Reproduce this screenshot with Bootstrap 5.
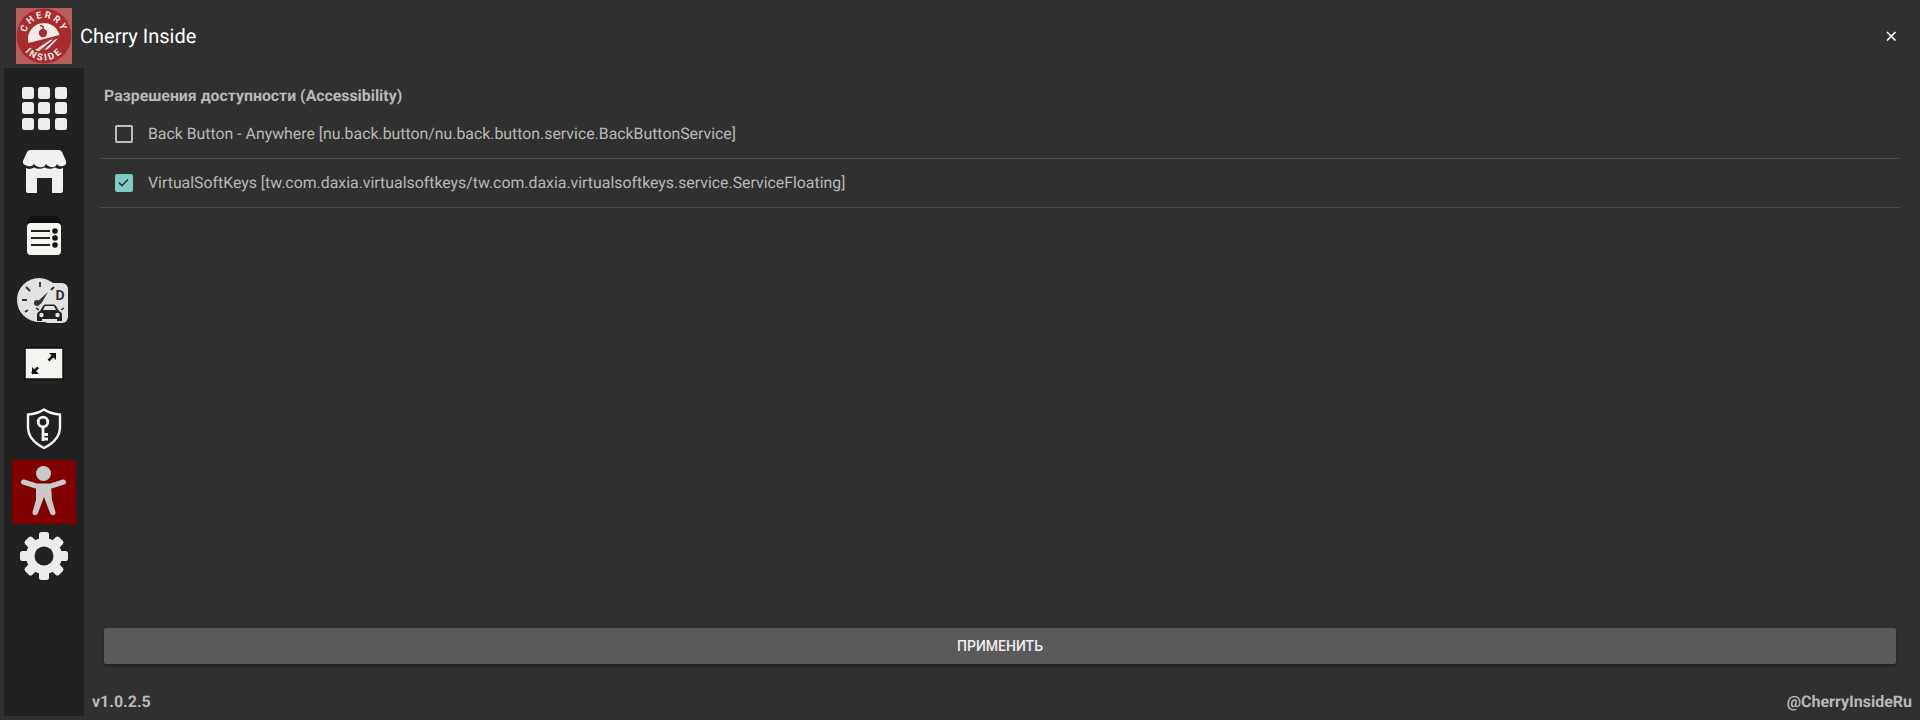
<!DOCTYPE html>
<html lang="ru">
<head>
  <meta charset="UTF-8" />
  <meta name="viewport" content="width=device-width, initial-scale=1" />
  <title>Cherry Inside</title>
  <link href="https://cdn.jsdelivr.net/npm/bootstrap@5.3.0/dist/css/bootstrap.min.css" rel="stylesheet">
  <style>
    body {
      background-color: #303030;
      font-family: Roboto, "Liberation Sans", sans-serif;
      text-rendering: geometricPrecision;
      overflow: hidden;
    }
    .app-head { height: 68px; padding: 8px 0 0 16px; }
    .app-logo { width: 56px; height: 56px; display: block; }
    .app-title { font-size: 20px; color: #fff; margin-left: 8px; font-weight: 400; line-height: 56px; }
    .app-close { background: none; border: 0; padding: 0; width: 24px; height: 56px; margin-right: 17px; line-height: 0; }
    .side-bar { width: 80px; margin-left: 4px; margin-bottom: 4px; padding: 8px; background-color: #212121; }
    .side-item { width: 64px; height: 64px; display: block; }
    .side-item svg { display: block; }
    .side-item.is-active { background-color: #800000; }
    .perm-title { font-size: 15.85px; font-weight: 700; color: #b8b8b8; line-height: 22px; margin: 17px 24px 3px 20px; }
    .perm-list { margin: 0 20px 0 16px; --bs-list-group-bg: transparent; --bs-list-group-border-color: #4b4b4b; }
    .perm-list .list-group-item,
    .perm-list .list-group-item:last-child { height: 48px; padding: 0 0 0 15px; font-size: 15.85px; color: #b8b8b8; display: flex; align-items: center; border-bottom: 1px solid #4b4b4b; box-sizing: content-box; }
    .perm-list .form-check-input { width: 18px; height: 18px; margin: 0 15px 0 0; background-color: transparent; border: 2px solid #bdbdbd; border-radius: 2px; flex: none; }
    .perm-list .form-check-input:checked {
      background-color: #80cbc4; border-color: #80cbc4;
      background-image: url("data:image/svg+xml,%3csvg xmlns='http://www.w3.org/2000/svg' viewBox='0 0 18 18'%3e%3cpath fill='none' stroke='%23303030' stroke-width='2' d='M2.5 8.5l4 4 7.500-8'/%3e%3c/svg%3e");
    }
    .apply-btn { margin: 0 24px 0 20px; height: 36px; background-color: #5a5a5a; color: #eee; border: 0; border-radius: 2px; font-size: 14px; font-weight: 500; box-shadow: 0 2px 3px rgba(0,0,0,.3); }
    .apply-btn:hover { background-color: #5a5a5a; color: #eee; }
    .foot-line { font-size: 16px; font-weight: 700; color: #b8b8b8; line-height: 24px; margin: 26px 8px 6px 8px; }
  </style>
</head>
<body>
  <div class="vh-100 d-flex flex-column">
    <!-- шапка -->
    <header class="app-head d-flex align-items-start flex-shrink-0">
      <svg class="app-logo" viewBox="0 0 56 56">
        <defs>
          <path id="arcTop" d="M10 28A18 18 0 0 1 46 28" />
          <path id="arcBot" d="M3.500 28A24.500 24.500 0 0 0 52.500 28" />
        </defs>
        <rect width="56" height="56" fill="#b9605f" />
        <circle cx="28" cy="28" r="27.500" fill="#a82c2d" />
        <text font-family="Roboto, sans-serif" font-size="9.500" font-weight="700" fill="#f5eeee" letter-spacing="2.200" text-anchor="middle"><textPath href="#arcTop" startOffset="50%">CHERRY</textPath></text>
        <text font-family="Roboto, sans-serif" font-size="9.500" font-weight="700" fill="#f5eeee" letter-spacing="2.200" text-anchor="middle"><textPath href="#arcBot" startOffset="50%">INSIDE</textPath></text>
        <path d="M12.500 35A16 16 0 0 1 43.500 27Z" fill="#f3eaea" />
        <path d="M19 42L34 32 37 31.500 23 43Z M28 42L39 31.500 42 30.500 32 41Z" fill="#f3eaea" />
        <circle cx="27" cy="25" r="4.200" fill="#a82c2d" />
        <path d="M27 21V18.500l-3-1" fill="none" stroke="#a82c2d" stroke-width="1.500" />
      </svg>
      <span class="app-title">Cherry Inside</span>
      <button class="app-close ms-auto d-flex align-items-center" type="button" aria-label="Close">
        <svg width="24" height="24" viewBox="0 0 24 24"><path d="M8 8l8.500 8.500M16.500 8L8 16.500" stroke="#fff" stroke-width="1.700" /></svg>
      </button>
    </header>

    <div class="d-flex flex-grow-1" style="min-height:0">
      <!-- боковое меню -->
      <nav class="side-bar flex-shrink-0">
        <a class="side-item" href="#">
          <svg width="64" height="64" viewBox="0 0 64 64" fill="#eeeeec">
            <rect x="10" y="11" width="12" height="12" rx="2.500" /><rect x="26" y="11" width="12" height="12" rx="2.500" /><rect x="43" y="11" width="12" height="12" rx="2.500" />
            <rect x="10" y="26" width="12" height="12" rx="2.500" /><rect x="26" y="26" width="12" height="12" rx="2.500" /><rect x="43" y="26" width="12" height="12" rx="2.500" />
            <rect x="10" y="42" width="12" height="12" rx="2.500" /><rect x="26" y="42" width="12" height="12" rx="2.500" /><rect x="43" y="42" width="12" height="12" rx="2.500" />
          </svg>
        </a>
        <a class="side-item" href="#">
          <svg width="64" height="64" viewBox="0 0 64 64" fill="#f0f0ee">
            <path d="M18 10H47Q49 10 50 12L54 21Q55 25 51 26 47 27 45 24 43 28 39 27 36 27 34 24 32 28 27 27 24 27 22 24 20 27 16 26 10 25 11 21L15 12Q16 10 18 10Z" />
            <path d="M14 28Q18 30 22 27.500 27 30 32.500 27.500 38 30 43 27.500 47 30 51 28V51Q51 53 49 53H40V38H25V53H16Q14 53 14 51Z" />
          </svg>
        </a>
        <a class="side-item" href="#">
          <svg width="64" height="64" viewBox="0 0 64 64">
            <path d="M15 22Q15 12 22 12H42Q49 12 49 22Z" fill="#111" />
            <rect x="15" y="19" width="34" height="32" rx="4" fill="#f5f5f1" />
            <path d="M19 27H38M19 34H38M19 41H38" stroke="#222" stroke-width="2" />
            <circle cx="43" cy="27" r="2.800" fill="#111" /><circle cx="43" cy="34" r="2.800" fill="#111" /><circle cx="43" cy="41" r="2.800" fill="#111" />
          </svg>
        </a>
        <a class="side-item" href="#">
          <svg width="64" height="64" viewBox="0 0 64 64">
            <rect x="30" y="15" width="26" height="40" rx="6" fill="#e2e2e0" />
            <circle cx="27" cy="32" r="22" fill="#e2e2e0" />
            <path d="M28 14v5M14 19l4 4M42 19l-3 3M10 32h5M13 44l3-2" stroke="#333" stroke-width="1.800" />
            <path d="M25 34l11-10-7 12Z" fill="#333" /><circle cx="25" cy="35" r="3" fill="#333" />
            <text x="48" y="32" font-family="Roboto, sans-serif" font-size="14" font-weight="700" fill="#333" text-anchor="middle">D</text>
            <path d="M26 43l3-6Q30 35 32 35H43Q45 35 46 37L49 43Q52 44 52 47V54H24V47Q24 44 26 43Z" fill="#e2e2e0" />
            <path d="M28 43l3-5Q32 36.500 33 36.500H42Q43 36.500 44 38L47 43Q50 44 50 47V53H45V51H30V53H25V47Q25 44 28 43Z" fill="#222" />
            <path d="M31 42l2-4H42l2 4Z" fill="#e2e2e0" />
            <circle cx="29.500" cy="47" r="2.200" fill="#e2e2e0" /><circle cx="45.500" cy="47" r="2.200" fill="#e2e2e0" />
            <path d="M24 40l3 2M52 40l-3 2" stroke="#222" stroke-width="1.500" />
          </svg>
        </a>
        <a class="side-item" href="#">
          <svg width="64" height="64" viewBox="0 0 64 64">
            <rect x="13" y="16" width="38" height="31" fill="#f5f5f1" stroke="#0c0c0c" stroke-width="1.500" />
            <path d="M36.500 28.500L42 23M20 41.500L26 35.500" stroke="#111" stroke-width="2.500" />
            <path d="M37 21H44V28ZM27 42H20V35Z" fill="#111" />
          </svg>
        </a>
        <a class="side-item" href="#">
          <svg width="64" height="64" viewBox="0 0 64 64" fill="none" stroke="#f5f5f5">
            <path d="M32 13.500Q39 18 48 18.500V31Q48 44 32 52 16 44 16 31V18.500Q25 18 32 13.500Z" stroke-width="2.400" stroke-linejoin="round" />
            <circle cx="31" cy="26" r="4.800" stroke-width="2.800" />
            <path d="M31 31V45M31 38.500h5M31 43h5" stroke-width="2.800" />
          </svg>
        </a>
        <a class="side-item is-active" href="#">
          <svg width="64" height="64" viewBox="0 0 64 64" fill="#c9c9c9">
            <circle cx="31.500" cy="13.500" r="7.500" />
            <path d="M11.500 22L24 26H39L51.500 22" fill="none" stroke="#c9c9c9" stroke-width="5" stroke-linecap="round" stroke-linejoin="round" />
            <path d="M24 25H39L40 40 43.500 52Q43.500 56 40 55 38.500 55 38 53L32 37 26 53Q25.500 55 23.500 55 20 55.500 20.500 52L24 40Z" />
          </svg>
        </a>
        <a class="side-item" href="#">
          <svg width="64" height="64" viewBox="0 0 64 64" fill="#ececec">
            <rect x="27" y="8" width="10" height="48" rx="2.500" />
            <rect x="27" y="8" width="10" height="48" rx="2.500" transform="rotate(45 32 32)" />
            <rect x="27" y="8" width="10" height="48" rx="2.500" transform="rotate(90 32 32)" />
            <rect x="27" y="8" width="10" height="48" rx="2.500" transform="rotate(135 32 32)" />
            <circle cx="32" cy="32" r="18" />
            <circle cx="32" cy="32" r="9.500" fill="#212121" />
          </svg>
        </a>
      </nav>

      <!-- содержимое -->
      <main class="flex-grow-1 d-flex flex-column" style="min-width:0">
        <div class="perm-title">Разрешения доступности (Accessibility)</div>
        <div class="list-group list-group-flush perm-list">
          <label class="list-group-item">
            <input class="form-check-input" type="checkbox">
            Back Button - Anywhere [nu.back.button/nu.back.button.service.BackButtonService]
          </label>
          <label class="list-group-item">
            <input class="form-check-input" type="checkbox" checked>
            VirtualSoftKeys [tw.com.daxia.virtualsoftkeys/tw.com.daxia.virtualsoftkeys.service.ServiceFloating]
          </label>
        </div>
        <button class="btn apply-btn mt-auto" type="button">ПРИМЕНИТЬ</button>
        <div class="foot-line d-flex justify-content-between">
          <span>v1.0.2.5</span>
          <span>@CherryInsideRu</span>
        </div>
      </main>
    </div>
  </div>

  <script src="https://cdn.jsdelivr.net/npm/bootstrap@5.3.0/dist/js/bootstrap.bundle.min.js"></script>
</body>
</html>
